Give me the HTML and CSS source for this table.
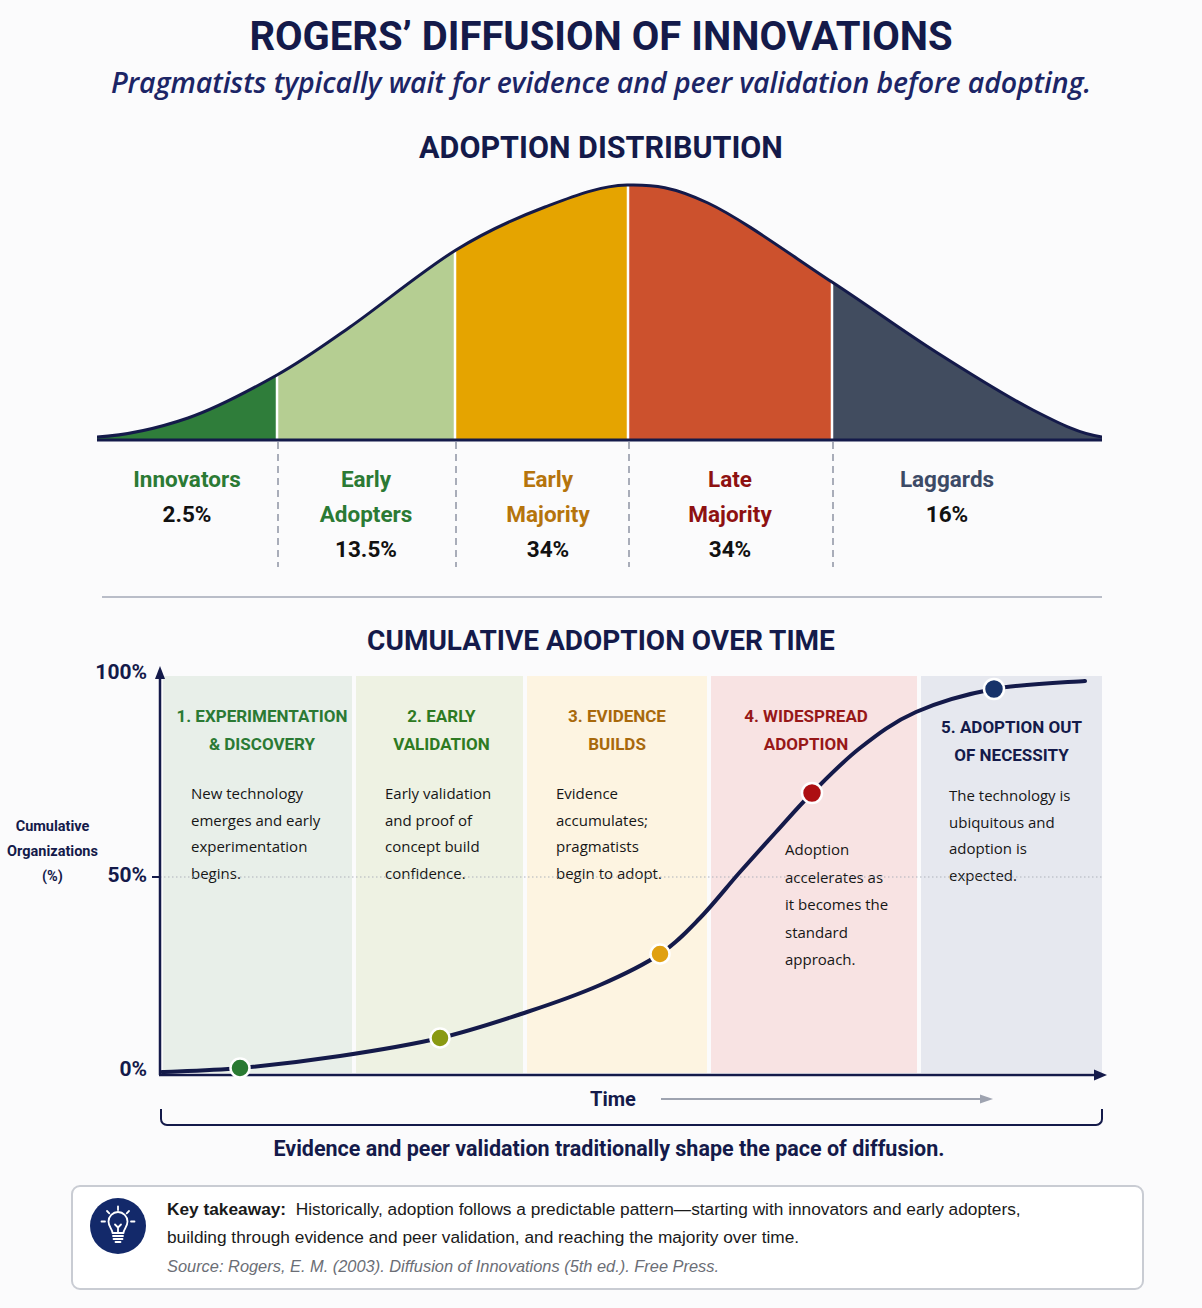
FILE: index.html
```html
<!DOCTYPE html>
<html lang="en">
<head>
<meta charset="utf-8">
<title>Rogers' Diffusion of Innovations</title>
<link rel="stylesheet" href="styles.css">
</head>
<body>
<main class="page">
  <header class="head">
    <h1 class="title">ROGERS’ DIFFUSION OF INNOVATIONS</h1>
    <p class="subtitle">Pragmatists typically wait for evidence and peer validation before adopting.</p>
  </header>

  <section class="dist">
    <h2 class="section-title">ADOPTION DISTRIBUTION</h2>
    <svg class="bell" width="1005" height="262" viewBox="97 180 1005 262" aria-hidden="true">
      <defs>
        <clipPath id="bellClip">
          <path d="M97,437 C130,435 158,428.3 188,418 C218,407.7 250,390.2 277,375 C304,359.8 320.2,347.8 350,327 C379.8,306.2 423.5,270 456,250 C488.5,230 516.5,217.8 545,207 C573.5,196.2 599.8,185.7 627,185 C654.2,184.3 673.8,186.8 708,203 C742.2,219.2 794,257.2 832,282 C870,306.8 902.5,330.7 936,352 C969.5,373.3 1005.3,395.8 1033,410 C1060.7,424.2 1080,434 1102,437 L1102,441 L97,441 Z"/>
        </clipPath>
      </defs>
      <g clip-path="url(#bellClip)">
        <rect x="97" y="180" width="180" height="262" fill="#2f7d3a"/>
        <rect x="277" y="180" width="178" height="262" fill="#b5ce92"/>
        <rect x="455" y="180" width="173" height="262" fill="#e5a400"/>
        <rect x="628" y="180" width="204" height="262" fill="#cc512d"/>
        <rect x="832" y="180" width="270" height="262" fill="#414c5f"/>
        <g stroke="#ffffff" stroke-width="2.5">
          <line x1="277" y1="180" x2="277" y2="442"/>
          <line x1="455" y1="180" x2="455" y2="442"/>
          <line x1="628" y1="180" x2="628" y2="442"/>
          <line x1="832" y1="180" x2="832" y2="442"/>
        </g>
      </g>
      <path d="M97,437 C130,435 158,428.3 188,418 C218,407.7 250,390.2 277,375 C304,359.8 320.2,347.8 350,327 C379.8,306.2 423.5,270 456,250 C488.5,230 516.5,217.8 545,207 C573.5,196.2 599.8,185.7 627,185 C654.2,184.3 673.8,186.8 708,203 C742.2,219.2 794,257.2 832,282 C870,306.8 902.5,330.7 936,352 C969.5,373.3 1005.3,395.8 1033,410 C1060.7,424.2 1080,434 1102,437" fill="none" stroke="#141a4a" stroke-width="3"/>
      <line x1="97" y1="440" x2="1102" y2="440" stroke="#141a4a" stroke-width="3"/>
    </svg>

    <div class="segments">
      <div class="seg seg-inn"><span class="seg-name c-green">Innovators</span><span class="seg-pct">2.5%</span></div>
      <div class="seg seg-ea"><span class="seg-name c-green">Early<br>Adopters</span><span class="seg-pct">13.5%</span></div>
      <div class="seg seg-em"><span class="seg-name c-amber">Early<br>Majority</span><span class="seg-pct">34%</span></div>
      <div class="seg seg-lm"><span class="seg-name c-red">Late<br>Majority</span><span class="seg-pct">34%</span></div>
      <div class="seg seg-lag"><span class="seg-name c-slate">Laggards</span><span class="seg-pct">16%</span></div>
    </div>
  </section>

  <hr class="divider">

  <section class="cumulative">
    <h2 class="section-title chart-title">CUMULATIVE ADOPTION OVER TIME</h2>
    <div class="chart">
      <div class="y-title">Cumulative<br>Organizations<br>(%)</div>
      <div class="y-ticks">
        <span class="tick tick-100">100%</span>
        <span class="tick tick-50">50%</span>
        <span class="tick tick-0">0%</span>
      </div>
      <div class="plot">
        <div class="phases">
          <div class="phase p1">
            <h3 class="phase-title">1. EXPERIMENTATION<br>&amp; DISCOVERY</h3>
            <p class="phase-text">New technology<br>emerges and early<br>experimentation<br>begins.</p>
          </div>
          <div class="phase p2">
            <h3 class="phase-title">2. EARLY<br>VALIDATION</h3>
            <p class="phase-text">Early validation<br>and proof of<br>concept build<br>confidence.</p>
          </div>
          <div class="phase p3">
            <h3 class="phase-title">3. EVIDENCE<br>BUILDS</h3>
            <p class="phase-text">Evidence<br>accumulates;<br>pragmatists<br>begin to adopt.</p>
          </div>
          <div class="phase p4">
            <h3 class="phase-title">4. WIDESPREAD<br>ADOPTION</h3>
            <p class="phase-text">Adoption<br>accelerates as<br>it becomes the<br>standard<br>approach.</p>
          </div>
          <div class="phase p5">
            <h3 class="phase-title">5. ADOPTION OUT<br>OF NECESSITY</h3>
            <p class="phase-text">The technology is<br>ubiquitous and<br>adoption is<br>expected.</p>
          </div>
        </div>
        <svg class="overlay" width="965" height="425" viewBox="150 660 965 425" aria-hidden="true">
          <line x1="160" y1="877" x2="1102" y2="877" stroke="#aeb2bc" stroke-width="1.2" stroke-dasharray="1.5 2.5"/>
          <line x1="152" y1="877" x2="160" y2="877" stroke="#141a4a" stroke-width="2"/>
          <line x1="160" y1="1075" x2="160" y2="676" stroke="#141a4a" stroke-width="2.5"/>
          <polygon points="160,666 155,679 165,679" fill="#141a4a"/>
          <line x1="159" y1="1075" x2="1096" y2="1075" stroke="#141a4a" stroke-width="2.5"/>
          <polygon points="1107,1075 1094,1069.5 1094,1080.5" fill="#141a4a"/>
          <path d="M162,1072 C175,1071.3 210.3,1070.7 240,1068 C269.7,1065.3 306.7,1061 340,1056 C373.3,1051 408.8,1045.3 440,1038 C471.2,1030.7 500.3,1020.8 527,1012 C553.7,1003.2 577.8,994.7 600,985 C622.2,975.3 643.3,965.2 660,954 C676.7,942.8 686.7,931.7 700,918 C713.3,904.3 727.3,886.3 740,872 C752.7,857.7 764,845.2 776,832 C788,818.8 798,807 812,793 C826,779 842.7,761.5 860,748 C877.3,734.5 893.7,721.8 916,712 C938.3,702.2 965.8,694.2 994,689 C1022.2,683.8 1069.8,682.3 1085,681" fill="none" stroke="#141a4a" stroke-width="4" stroke-linecap="round"/>
          <g stroke="#ffffff" stroke-width="2.5">
            <circle cx="240" cy="1068" r="9.5" fill="#2a7a32"/>
            <circle cx="440" cy="1038" r="9.5" fill="#8a9a12"/>
            <circle cx="660" cy="954" r="9.5" fill="#e0a012"/>
            <circle cx="812" cy="793" r="10" fill="#ad0f12"/>
            <circle cx="994" cy="689" r="10" fill="#17336a"/>
          </g>
        </svg>
      </div>
    </div>

    <div class="time-row">
      <span class="time-label">Time</span>
      <svg class="time-arrow" width="332" height="12" viewBox="0 0 332 12" aria-hidden="true">
        <line x1="0" y1="6" x2="321" y2="6" stroke="#9ea3b0" stroke-width="2"/>
        <polygon points="332,6 319,1.5 319,10.5" fill="#9ea3b0"/>
      </svg>
    </div>
    <div class="bracket"></div>
    <p class="caption">Evidence and peer validation traditionally shape the pace of diffusion.</p>
  </section>

  <aside class="takeaway">
    <div class="icon">
      <svg width="56" height="56" viewBox="0 0 56 56" aria-hidden="true">
        <circle cx="28" cy="28" r="28" fill="#13296a"/>
        <g fill="none" stroke="#ffffff" stroke-width="1.8" stroke-linecap="round" stroke-linejoin="round">
          <line x1="28" y1="8.5" x2="28" y2="12"/>
          <line x1="17" y1="13" x2="19.3" y2="15.3"/>
          <line x1="39" y1="13" x2="36.7" y2="15.3"/>
          <line x1="11.5" y1="23.5" x2="15" y2="23.5"/>
          <line x1="41" y1="23.5" x2="44.5" y2="23.5"/>
          <path d="M22.5,35 C22.5,31 18.5,29 18.5,23.5 A9.5,9.5 0 1 1 37.5,23.5 C37.5,29 33.5,31 33.5,35 Z"/>
          <path d="M25,26.5 L28,29.5 L31,26.5 M28,29.5 V35"/>
          <line x1="23" y1="38" x2="33" y2="38"/>
          <line x1="23.5" y1="41" x2="32.5" y2="41"/>
          <line x1="25.5" y1="44" x2="30.5" y2="44"/>
        </g>
      </svg>
    </div>
    <div class="takeaway-text">
      <p class="takeaway-main"><strong>Key takeaway:</strong>&nbsp; Historically, adoption follows a predictable pattern—starting with innovators and early adopters,<br>building through evidence and peer validation, and reaching the majority over time.</p>
      <p class="source">Source: Rogers, E. M. (2003). Diffusion of Innovations (5th ed.). Free Press.</p>
    </div>
  </aside>
</main>
</body>
</html>
```

FILE: styles.css
```css
* { box-sizing: border-box; }

body {
  margin: 0;
  background: #fbfbfc;
  font-family: Roboto, "Liberation Sans", sans-serif;
  color: #141a4a;
}

.page {
  width: 1202px;
  padding-bottom: 16px;
}

/* Header */
.head {
  text-align: center;
  padding-top: 15px;
}

.title {
  margin: 0;
  font: 700 40px/44px Roboto, sans-serif;
  color: #141a4a;
}

.subtitle {
  margin: 5px 0 0;
  font: italic 600 28.5px/36px "Open Sans", sans-serif;
  color: #1c2566;
  letter-spacing: -0.1px;
}

.section-title {
  margin: 30px 0 0;
  text-align: center;
  font: 700 30.5px/36px Roboto, sans-serif;
  color: #141a4a;
}

/* Bell curve */
.bell {
  display: block;
  margin: 14px 0 0 97px;
}

.segments {
  display: grid;
  grid-template-columns: 180px 178px 173px 204px 270px;
  margin-left: 97px;
  height: 120px;
}

.seg {
  display: flex;
  flex-direction: column;
  align-items: center;
  padding-top: 20px;
  font: 700 22.5px/35px Roboto, sans-serif;
  text-align: center;
}

.seg + .seg {
  background-image: linear-gradient(#a9adb9 62%, transparent 0);
  background-size: 1.5px 12px;
  background-repeat: repeat-y;
  background-position: left top;
}

.seg-em { padding-left: 13px; }
.seg-lag { padding-right: 40px; }

.seg-pct { color: #111111; }
.c-green { color: #2b7a34; }
.c-amber { color: #b5740c; }
.c-red { color: #8e1111; }
.c-slate { color: #3c4a66; }

.divider {
  margin: 34px 0 0 102px;
  width: 1000px;
  border: 0;
  height: 2px;
  background: #b9bdc8;
}

/* Cumulative chart */
.chart-title {
  margin-top: 26px;
  font-size: 28px;
  line-height: 34px;
}

.chart {
  display: flex;
  margin-top: 10px;
  height: 410px;
}

.y-title {
  width: 105px;
  padding-top: 146px;
  text-align: center;
  font: 700 14.5px/25px Roboto, sans-serif;
  color: #141a4a;
}

.y-ticks {
  width: 42px;
  margin-right: 13px;
  display: flex;
  flex-direction: column;
  align-items: flex-end;
  font: 700 21px/24px Roboto, sans-serif;
  color: #141a4a;
}

.tick-100 { margin-top: -8px; }
.tick-50 { margin-top: 179px; }
.tick-0 { margin-top: 170px; }

.plot {
  position: relative;
  width: 945px;
  height: 410px;
}

.phases {
  display: flex;
  gap: 4px;
  margin: 8px 0 0 3px;
  width: 939px;
  height: 397px;
}

.phase {
  padding-top: 26px;
}

.p1 { width: 189px; background: #e8efe9; }
.p2 { width: 167px; background: #eef2e3; }
.p3 { width: 180px; background: #fdf4e1; }
.p4 { width: 206px; background: #f8e3e3; }
.p5 { width: 181px; background: #e6e8ef; padding-top: 37px; }

.phase-title {
  margin: 0;
  text-align: center;
  font: 700 17px/28px Roboto, sans-serif;
}

.p1 .phase-title { color: #2b7a34; padding-left: 9px; }
.p2 .phase-title { color: #2e7a22; padding-left: 4px; }
.p3 .phase-title { color: #a8690c; }
.p4 .phase-title { color: #971818; padding-right: 16px; }
.p5 .phase-title { color: #141a4a; }

.phase-text {
  margin: 22px 0 0;
  padding-left: 28px;
  font: 400 15px/26.5px "Open Sans", sans-serif;
  color: #161616;
}

.p2 .phase-text { padding-left: 29px; }
.p3 .phase-text { padding-left: 29px; }
.p4 .phase-text { margin-top: 78px; padding-left: 74px; line-height: 27.5px; }
.p5 .phase-text { margin-top: 13px; line-height: 26.7px; }

.overlay {
  position: absolute;
  left: -10px;
  top: -8px;
  pointer-events: none;
}

.time-row {
  display: flex;
  align-items: center;
  gap: 25px;
  margin-top: 11px;
  padding-left: 590px;
  height: 20px;
}

.time-label {
  font: 700 20px/20px Roboto, sans-serif;
  color: #141a4a;
}

.time-arrow { display: block; }

.bracket {
  margin-left: 160px;
  width: 943px;
  height: 17px;
  border: 2px solid #141a4a;
  border-top: 0;
  border-radius: 0 0 7px 7px;
}

.caption {
  margin: 9px 0 0;
  text-align: center;
  padding-left: 16px;
  font: 700 21.5px/28px Roboto, sans-serif;
  color: #141a4a;
}

/* Takeaway */
.takeaway {
  display: flex;
  align-items: flex-start;
  gap: 21px;
  margin: 22px 0 0 71px;
  width: 1073px;
  height: 105px;
  padding: 8px 20px 0 17px;
  background: #ffffff;
  border: 2px solid #c9ccd3;
  border-radius: 9px;
}

.icon {
  margin-top: 3px;
  width: 56px;
  height: 56px;
  flex: none;
}

.icon svg { display: block; }

.takeaway-text {
  font-family: "Liberation Sans", Arial, sans-serif;
  color: #1a1a1a;
}

.takeaway-main {
  margin: 0;
  font-size: 17.3px;
  line-height: 28px;
}

.takeaway-main strong { font-weight: 700; }

.source {
  margin: 0;
  font-style: italic;
  font-size: 16.4px;
  line-height: 30px;
  color: #6b6e76;
}
```
